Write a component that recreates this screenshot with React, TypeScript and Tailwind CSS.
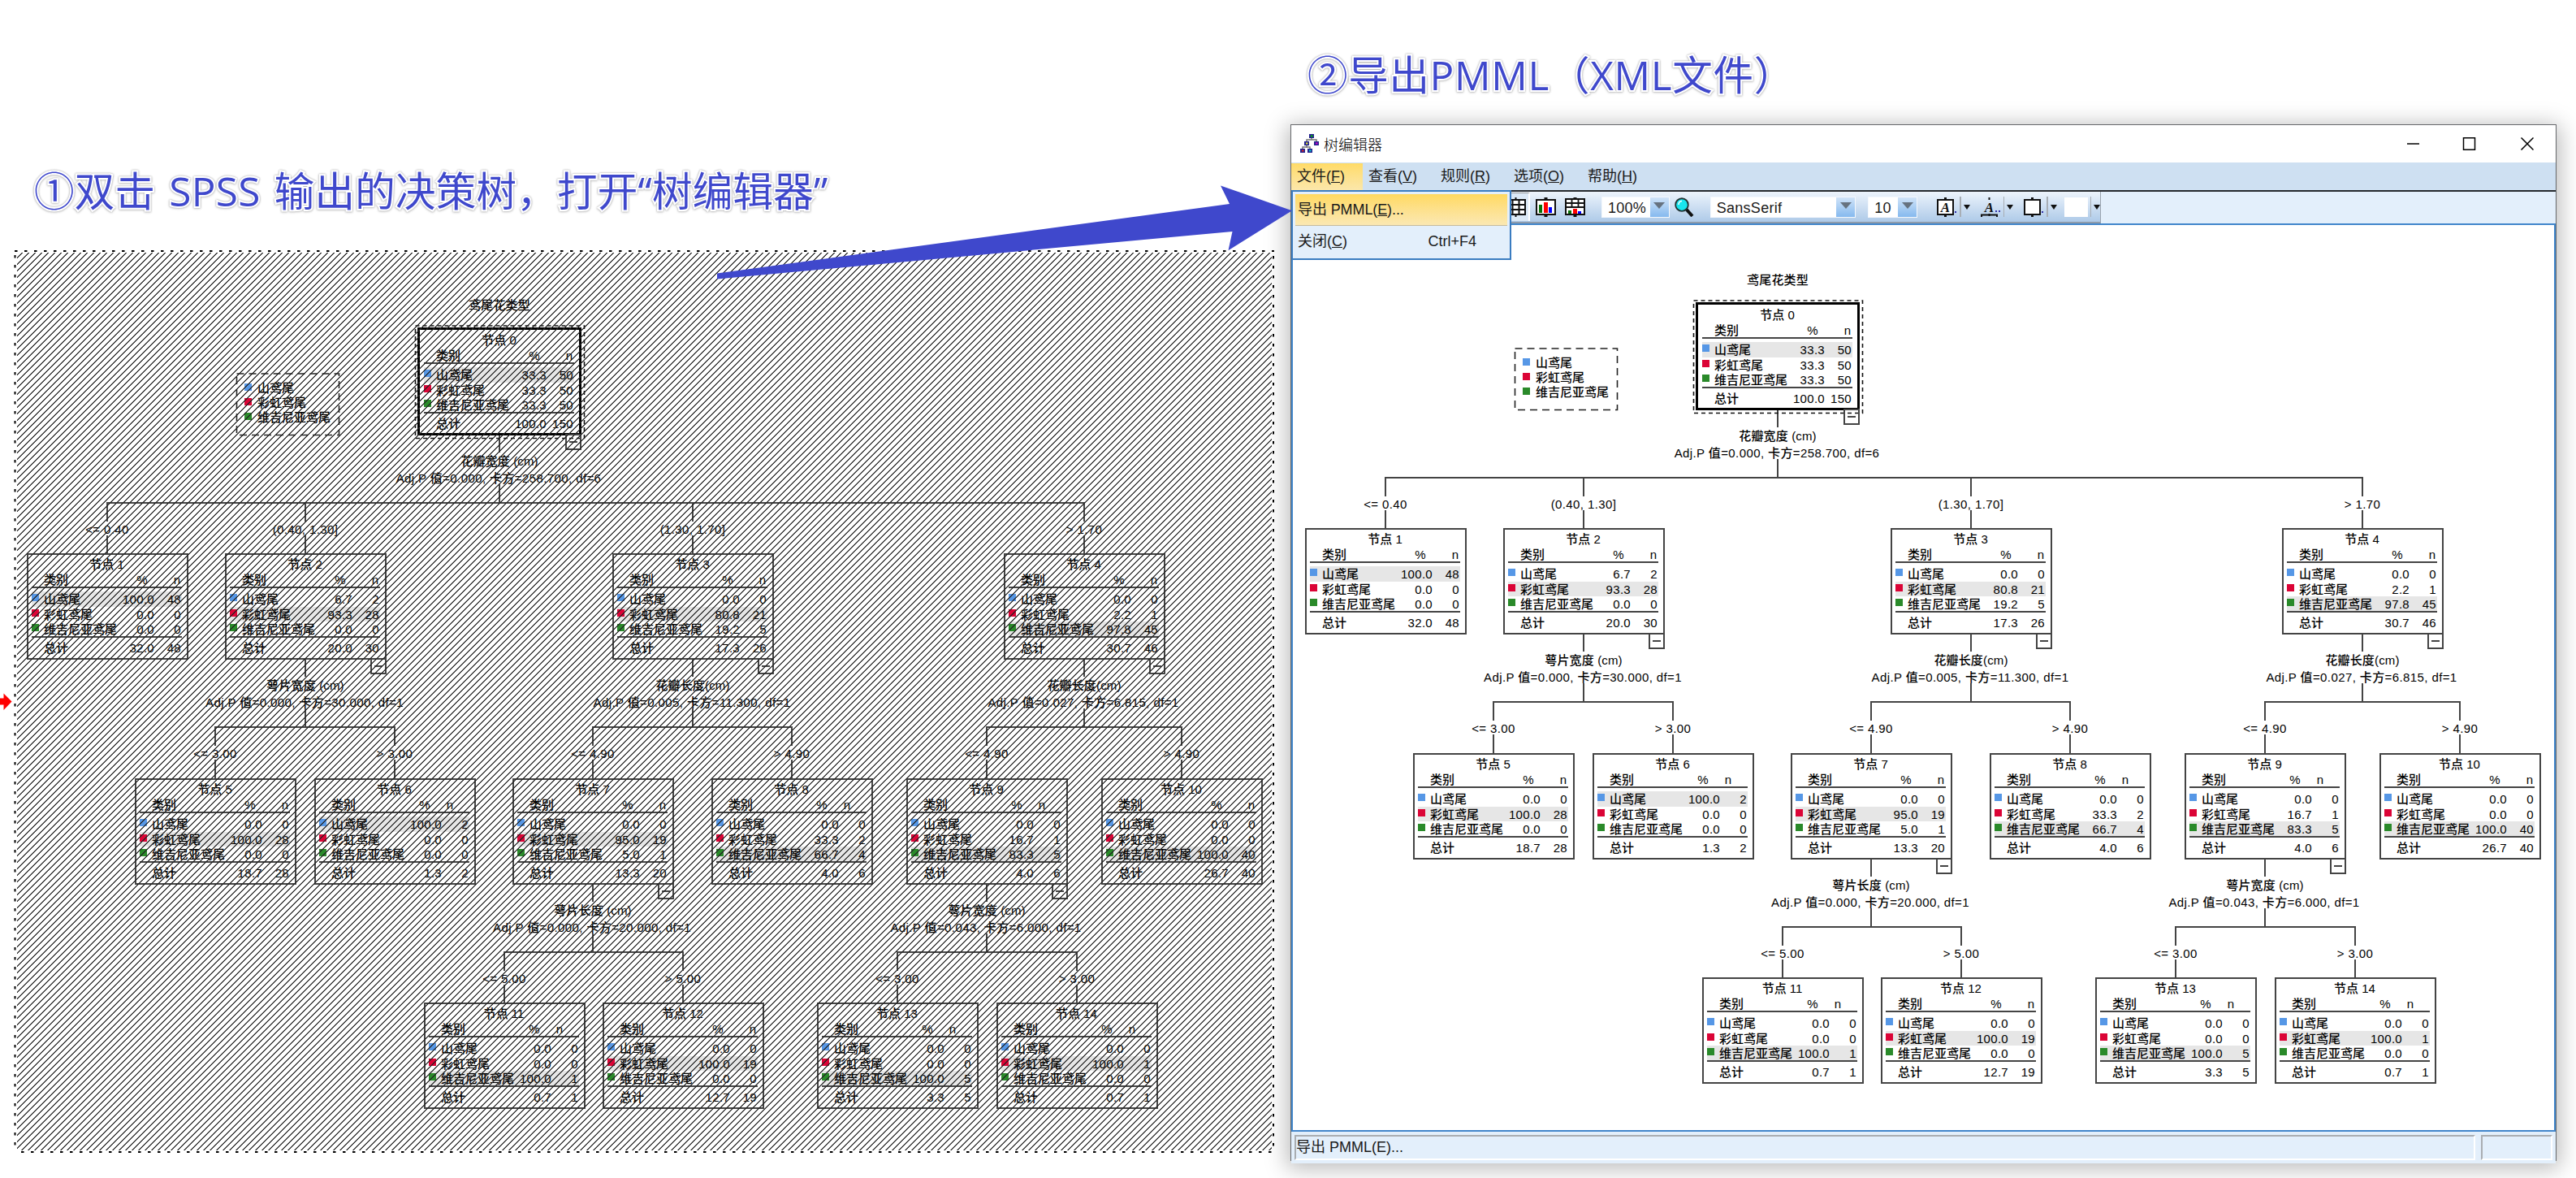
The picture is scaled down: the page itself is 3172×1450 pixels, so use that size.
import React from "react";

type Row = [string, string];
type NodeData = {
  id: number;
  x: number;
  y: number;
  rows: [Row, Row, Row];
  total: Row;
  hl: number;
  narrow?: boolean;
};
type Split = { from: number; title: string; stat: string; to: [number, string][] };

const ROW_Y = [97, 373, 650, 926];

const NODES: NodeData[] = [
  { id: 0, x: 498, y: ROW_Y[0], rows: [["33.3", "50"], ["33.3", "50"], ["33.3", "50"]], total: ["100.0", "150"], hl: 0 },
  { id: 1, x: 15, y: ROW_Y[1], rows: [["100.0", "48"], ["0.0", "0"], ["0.0", "0"]], total: ["32.0", "48"], hl: 0 },
  { id: 2, x: 259, y: ROW_Y[1], rows: [["6.7", "2"], ["93.3", "28"], ["0.0", "0"]], total: ["20.0", "30"], hl: 1 },
  { id: 3, x: 736, y: ROW_Y[1], rows: [["0.0", "0"], ["80.8", "21"], ["19.2", "5"]], total: ["17.3", "26"], hl: 1 },
  { id: 4, x: 1218, y: ROW_Y[1], rows: [["0.0", "0"], ["2.2", "1"], ["97.8", "45"]], total: ["30.7", "46"], hl: 2 },
  { id: 5, x: 148, y: ROW_Y[2], rows: [["0.0", "0"], ["100.0", "28"], ["0.0", "0"]], total: ["18.7", "28"], hl: 1 },
  { id: 6, x: 369, y: ROW_Y[2], rows: [["100.0", "2"], ["0.0", "0"], ["0.0", "0"]], total: ["1.3", "2"], hl: 0, narrow: true },
  { id: 7, x: 613, y: ROW_Y[2], rows: [["0.0", "0"], ["95.0", "19"], ["5.0", "1"]], total: ["13.3", "20"], hl: 1 },
  { id: 8, x: 858, y: ROW_Y[2], rows: [["0.0", "0"], ["33.3", "2"], ["66.7", "4"]], total: ["4.0", "6"], hl: 2, narrow: true },
  { id: 9, x: 1098, y: ROW_Y[2], rows: [["0.0", "0"], ["16.7", "1"], ["83.3", "5"]], total: ["4.0", "6"], hl: 2, narrow: true },
  { id: 10, x: 1338, y: ROW_Y[2], rows: [["0.0", "0"], ["0.0", "0"], ["100.0", "40"]], total: ["26.7", "40"], hl: 2 },
  { id: 11, x: 504, y: ROW_Y[3], rows: [["0.0", "0"], ["0.0", "0"], ["100.0", "1"]], total: ["0.7", "1"], hl: 2, narrow: true },
  { id: 12, x: 724, y: ROW_Y[3], rows: [["0.0", "0"], ["100.0", "19"], ["0.0", "0"]], total: ["12.7", "19"], hl: 1 },
  { id: 13, x: 988, y: ROW_Y[3], rows: [["0.0", "0"], ["0.0", "0"], ["100.0", "5"]], total: ["3.3", "5"], hl: 2, narrow: true },
  { id: 14, x: 1209, y: ROW_Y[3], rows: [["0.0", "0"], ["100.0", "1"], ["0.0", "0"]], total: ["0.7", "1"], hl: 1, narrow: true },
];

const SPLITS: Split[] = [
  { from: 0, title: "花瓣宽度 (cm)", stat: "Adj.P 值=0.000, 卡方=258.700, df=6", to: [[1, "<= 0.40"], [2, "(0.40, 1.30]"], [3, "(1.30, 1.70]"], [4, "> 1.70"]] },
  { from: 2, title: "萼片宽度 (cm)", stat: "Adj.P 值=0.000, 卡方=30.000, df=1", to: [[5, "<= 3.00"], [6, "> 3.00"]] },
  { from: 3, title: "花瓣长度(cm)", stat: "Adj.P 值=0.005, 卡方=11.300, df=1", to: [[7, "<= 4.90"], [8, "> 4.90"]] },
  { from: 4, title: "花瓣长度(cm)", stat: "Adj.P 值=0.027, 卡方=6.815, df=1", to: [[9, "<= 4.90"], [10, "> 4.90"]] },
  { from: 7, title: "萼片长度 (cm)", stat: "Adj.P 值=0.000, 卡方=20.000, df=1", to: [[11, "<= 5.00"], [12, "> 5.00"]] },
  { from: 9, title: "萼片宽度 (cm)", stat: "Adj.P 值=0.043, 卡方=6.000, df=1", to: [[13, "<= 3.00"], [14, "> 3.00"]] },
];

const CATEGORIES = [
  { name: "山鸢尾", swatch: "bg-[#5697e6]" },
  { name: "彩虹鸢尾", swatch: "bg-[#db0436]" },
  { name: "维吉尼亚鸢尾", swatch: "bg-[#2a8a2a]" },
];

const NODE_W = 199;
const NODE_H = 131;
const SPLIT_IDS = SPLITS.map((s) => s.from);

function TreeNode({ node }: { node: NodeData }) {
  const rowHeights = ["h-[19px]", "h-[18px]", "h-[18px]"];
  const root = node.id === 0;
  return (
    <div className="absolute h-[131px] w-[199px]" style={{ left: node.x, top: node.y }}>
      {root && <div className="absolute -left-[2px] -right-px -top-[2px] bottom-0 border-[3px] border-black" />}
      <div className={`flex h-full flex-col border-2 pl-1 pr-1.5 ${root ? "border-transparent" : "border-[#444]"}`}>
        <div className="flex h-[22px] shrink-0 items-center justify-center">节点 {node.id}</div>
        <div className="flex h-[19px] shrink-0 items-center border-b-2 border-[#444] pl-[15px] pr-0.5">
          <span className="flex-1">类别</span>
          <span className={node.narrow ? "mr-3.5" : "mr-[32px]"}>%</span>
          <span className={node.narrow ? "mr-[18px] ml-1.5" : ""}>n</span>
        </div>
        <div className="mt-1 flex shrink-0 flex-col">
          {CATEGORIES.map((c, i) => (
            <div key={c.name} className={`flex items-center pr-px ${rowHeights[i]} ${node.hl === i ? "bg-[#e6e6e6]" : ""}`}>
              <div className="w-[15px] shrink-0">
                <div className={`mb-1 size-[9px] ${c.swatch}`} />
              </div>
              <span className="w-[91px] shrink-0">{c.name}</span>
              <span className="w-[45px] shrink-0 text-right tracking-[0.3px]">{node.rows[i][0]}</span>
              <span className="flex-1 text-right tracking-[0.3px]">{node.rows[i][1]}</span>
            </div>
          ))}
        </div>
        <div className="flex h-[26px] shrink-0 items-center border-t-2 border-[#444] pr-px">
          <span className="ml-[15px] w-[91px] shrink-0">总计</span>
          <span className="w-[45px] shrink-0 text-right tracking-[0.3px]">{node.total[0]}</span>
          <span className="flex-1 text-right tracking-[0.3px]">{node.total[1]}</span>
        </div>
      </div>
      {SPLIT_IDS.includes(node.id) && (
        <div className={`absolute top-[129px] flex h-[20px] w-[20px] items-center justify-center border-2 border-[#444] ${root ? "-right-px" : "right-0"}`}>
          <div className="h-[2px] w-[10px] bg-[#444]" />
        </div>
      )}
    </div>
  );
}

function CenterText({ x, y, wide, children }: { x: number; y: number; wide?: boolean; children: React.ReactNode }) {
  return (
    <div
      className={`absolute -translate-x-1/2 -translate-y-1/2 ${wide ? "tracking-[0.4px]" : "tracking-[0.15px]"}`}
      style={{ left: x, top: y }}
    >
      {children}
    </div>
  );
}

/* Decision tree diagram: connector lines, split labels, legend and nodes. */
function Tree() {
  const centre = (id: number) => NODES[id].x + Math.floor(NODE_W / 2);
  return (
    <div className="relative h-[1113px] w-[1551px] whitespace-nowrap font-['Liberation_Sans','Noto_Sans_CJK_SC',sans-serif] text-[15px] font-medium leading-none text-black">
      <svg className="absolute inset-0" width="1551" height="1113" fill="none" stroke="#444" strokeWidth="2">
        {SPLITS.map((s) => {
          const x = centre(s.from);
          const b = NODES[s.from].y + NODE_H - 1;
          const bar = b + 84;
          const xs = s.to.map(([id]) => centre(id));
          return (
            <g key={s.from}>
              <path d={`M${x} ${b}V${b + 22}M${x} ${b + 61}V${bar}`} />
              <path d={`M${xs[0] - 1} ${bar}H${xs[xs.length - 1] + 1}`} />
              {xs.map((cx) => (
                <path key={cx} d={`M${cx} ${bar}V${bar + 23}M${cx} ${bar + 40}V${bar + 63}`} />
              ))}
            </g>
          );
        })}
        <rect x="493.500" y="93" width="208" height="138.500" strokeDasharray="5 4" stroke="#111" strokeWidth="1.6" />
        <rect x="273.500" y="152" width="126" height="75.500" strokeDasharray="9 6" stroke="#222" strokeWidth="1.6" />
      </svg>
      <CenterText x={597} y={67}>鸢尾花类型</CenterText>
      <div className="absolute left-[283px] top-[160px] flex flex-col">
        {CATEGORIES.map((c) => (
          <div key={c.name} className="flex h-[18px] items-center">
            <div className="w-4"><div className={`mb-px size-[9px] ${c.swatch}`} /></div>
            {c.name}
          </div>
        ))}
      </div>
      {SPLITS.map((s) => {
        const b = NODES[s.from].y + NODE_H - 1;
        return (
          <React.Fragment key={s.from}>
            <CenterText x={centre(s.from)} y={b + 32}>{s.title}</CenterText>
            <CenterText x={centre(s.from) - 1} y={b + 52.5} wide>{s.stat}</CenterText>
            {s.to.map(([id, label]) => (
              <CenterText key={id} x={centre(id)} y={b + 116} wide>{label}</CenterText>
            ))}
          </React.Fragment>
        );
      })}
      {NODES.map((n) => (
        <TreeNode key={n.id} node={n} />
      ))}
    </div>
  );
}

function Heading({ className, children }: { className: string; children: React.ReactNode }) {
  return (
    <h1
      className={`whitespace-nowrap font-['Open_Sans','Noto_Sans_CJK_SC',sans-serif] text-[49.5px] leading-[60px] text-[#3f48cc] [paint-order:stroke_fill] [-webkit-text-stroke:4px_white] [filter:drop-shadow(0_0_1px_#aaa)_drop-shadow(0_1px_1px_#ddd)] ${className}`}
    >
      {children}
    </h1>
  );
}

function MenuItem({ label, mnemonic, active }: { label: string; mnemonic: string; active?: boolean }) {
  return (
    <div className={`flex items-center pl-[7px] pr-[22px] ${active ? "bg-linear-to-b from-[#ffdb66] to-[#fbe7aa]" : ""}`}>
      <span>{label}(<u>{mnemonic}</u>)</span>
    </div>
  );
}

function Combo({ value, className }: { value: string; className: string }) {
  return (
    <div className={`flex h-[26px] justify-between border border-[#f4f8fd] bg-white ${className}`}>
      <span className="pl-[7px] leading-[26px] tracking-[0.3px]">{value}</span>
      <div className="flex w-[23px] items-center justify-center bg-linear-to-b from-[#cfe3f8] to-[#85b9ee]">
        <svg width="14" height="8" className="mb-1"><path d="M0 0H14L7 8Z" fill="#66727f" /></svg>
      </div>
    </div>
  );
}

function Caret() {
  return (
    <>
      <div className="h-[25px] w-[1.5px] bg-[#a8aeb5]" />
      <svg width="8" height="6" className="ml-[3px]"><path d="M0 0H8L4 6Z" fill="#111" /></svg>
    </>
  );
}

function GridIcon() {
  return (
    <svg width="25" height="24" viewBox="0 0 25 24" fill="none" stroke="#111" strokeWidth="2">
      <rect x="1" y="3" width="23" height="18" fill="#fff" />
      <path d="M1 9H24M1 15H24M8.500 3V21M16.500 3V21M12.500 0V3M12.500 21V24" />
    </svg>
  );
}

function ChartIcon() {
  return (
    <svg width="25" height="24" viewBox="0 0 25 24">
      <rect x="1" y="3" width="23" height="18" fill="#fff" stroke="#111" strokeWidth="2" />
      <path d="M12.500 0V3M12.500 21V24" stroke="#111" strokeWidth="4" />
      <path d="M4 9H8V19H4Z" fill="#087008" />
      <path d="M10 6H15V19H10Z" fill="#f00" />
      <path d="M16 12H20V19H16Z" fill="#00f" />
    </svg>
  );
}

function GridChartIcon() {
  return (
    <svg width="25" height="24" viewBox="0 0 25 24">
      <rect x="1" y="2" width="23" height="19" fill="#fff" stroke="#111" strokeWidth="2" />
      <path d="M1 7H24M1 12H24M8.500 2V12M16.500 2V12" stroke="#111" strokeWidth="1.8" />
      <path d="M12.500 0V3M12.500 21V24" stroke="#111" strokeWidth="4" />
      <path d="M4 16H8V20H4Z" fill="#087008" />
      <path d="M10 14H15V20H10Z" fill="#f00" />
      <path d="M16 17H20V20H16Z" fill="#00f" />
    </svg>
  );
}

function TreeEditorIcon() {
  return (
    <svg width="24" height="24" viewBox="0 0 24 24">
      <path d="M14 4V7M8 11V7H20V11M8 14V17M3 20V16H12V20" stroke="#777" strokeWidth="1.5" fill="none" />
      <g fill="#23238e">
        <path d="M11 0H17V5H11ZM5 9H11V14H5ZM17 9H23V14H17ZM0 18H6V23H0ZM9 18H15V23H9Z" />
      </g>
      <path d="M13 1.500H15.500V3.500H13Z" fill="#0b0" />
      <path d="M7 10.500H9.500V12.500H7Z" fill="#dd3" />
      <path d="M19 10.500H21.500V12.500H19Z" fill="#c0c" />
      <path d="M2 19.500H4.500V21.500H2Z" fill="#d22" />
      <path d="M11 19.500H13.500V21.500H11Z" fill="#0cc" />
    </svg>
  );
}

function EditorWindow() {
  return (
    <div className="relative flex h-[1276px] w-[1559px] flex-col border border-[#66686b] bg-white shadow-[0_5px_26px_4px_rgba(0,0,0,0.28)]">
      {/* title bar */}
      <div className="flex h-[46px] shrink-0 items-center pl-[11px] pr-[27px]">
        <TreeEditorIcon />
        <span className="ml-[5px] flex-1 font-['Noto_Sans_CJK_SC',sans-serif] text-[18px] font-light text-black">树编辑器</span>
        <svg width="156" height="16" fill="none" stroke="#000" strokeWidth="1.500">
          <path d="M0 8H15M140.500 0.500L155.500 15.500M155.500 0.500L140.500 15.500" />
          <rect x="69.500" y="0.750" width="14" height="14.500" />
        </svg>
      </div>
      <div className="flex h-[34px] shrink-0 bg-[#cee0f2] pt-px">
        <MenuItem label="文件" mnemonic="F" active />
        <MenuItem label="查看" mnemonic="V" />
        <MenuItem label="规则" mnemonic="R" />
        <MenuItem label="选项" mnemonic="O" />
        <MenuItem label="帮助" mnemonic="H" />
      </div>
      {/* toolbar */}
      <div className="flex h-[41px] shrink-0 border-t-2 border-[#26292d] bg-[#e3effb]">
        <div className="flex w-[997px] items-center border-b-2 border-r border-b-[#8e9bab] border-r-[#9aa3ad] bg-linear-to-b from-[#edf4fc] to-[#aecae8] pl-[264px]">
          <div className="flex h-[35px] w-[30px] items-center border-r-2 border-t border-r-white border-t-[#999] bg-[#dce9f6]">
            <GridIcon />
          </div>
          <div className="ml-[7px]"><ChartIcon /></div>
          <div className="ml-[11px]"><GridChartIcon /></div>
          <Combo value="100%" className="ml-[20px] w-[84px]" />
          <svg className="ml-[6px]" width="24" height="24" viewBox="0 0 24 24">
            <path d="M14 14L22 23" stroke="#111" strokeWidth="4" />
            <circle cx="9" cy="9" r="7.800" fill="#19e6ee" stroke="#233" strokeWidth="1.800" />
            <path d="M5 9A4.500 4.500 0 0 1 9 4.500" stroke="#fff" strokeWidth="1.500" fill="none" />
          </svg>
          <Combo value="SansSerif" className="ml-[20px] w-[180px]" />
          <Combo value="10" className="ml-[15px] w-[61px]" />
          <div className="ml-[24px] flex items-center">
            <svg width="28" height="24" viewBox="0 0 28 24" className="overflow-visible">
              <rect x="1" y="3" width="19" height="18" fill="#fff" stroke="#111" strokeWidth="2" />
              <path d="M10.500 0V3M10.500 21V24" stroke="#111" strokeWidth="3" />
              <text x="10.500" y="18" textAnchor="middle" fontSize="17" fontWeight="bold" fontStyle="italic" fontFamily="Liberation Serif" fill="#111">A</text>
              <path d="M22 17H24V19H22Z" fill="#33a" />
            </svg>
            <Caret />
          </div>
          <div className="ml-[13px] flex items-center">
            <svg width="28" height="24" viewBox="0 0 28 24">
              <path d="M10.500 0V3M10.500 20V23M1 24V21.500H20V24" stroke="#111" strokeWidth="2" fill="none" />
              <text x="10.500" y="18" textAnchor="middle" fontSize="17" fontWeight="bold" fontStyle="italic" fontFamily="Liberation Serif" fill="#111">A</text>
              <path d="M18 16H20V18H18ZM22 16H24V18H22Z" fill="#33a" />
            </svg>
            <Caret />
          </div>
          <div className="ml-[13px] flex items-center">
            <svg width="28" height="24" viewBox="0 0 28 24">
              <rect x="1" y="3" width="19" height="18" fill="#fff" stroke="#111" strokeWidth="2" />
              <path d="M10.500 0V3M10.500 21V24" stroke="#111" strokeWidth="3" />
              <path d="M22 17H24V19H22Z" fill="#33a" />
            </svg>
            <Caret />
          </div>
          <div className="ml-[9px] flex items-center">
            <div className="mr-[3px] h-[24px] w-[29px] bg-white" />
            <Caret />
          </div>
        </div>
      </div>
      {/* canvas */}
      <div className="h-[1118px] shrink-0 border-2 border-[#4186cb] bg-white">
        <Tree />
      </div>
      {/* status bar */}
      <div className="flex flex-1 gap-[7px] bg-[#e3effb] pb-[4px] pl-[4px] pr-[4px] pt-[4px]">
        <div className="flex flex-1 items-center border-2 border-b-white border-l-[#a9adb1] border-r-white border-t-[#a9adb1]">
          导出 PMML(E)...
        </div>
        <div className="w-[88px] border-2 border-b-white border-l-[#a9adb1] border-r-white border-t-[#a9adb1]" />
      </div>
      {/* open file menu */}
      <div className="absolute left-0 top-[80px] flex h-[86px] w-[271px] flex-col border-2 border-[#3a7cc0] bg-[#e3effb] px-[3px] pt-[3px]">
        <div className="flex h-[39px] shrink-0 items-center border-b border-[#c5bb9c] bg-linear-to-b from-[#ffd95f] to-[#fbe8b2] pl-[3px]">
          <span className="-tracking-[0.1px]">导出 PMML(<u>E</u>)...</span>
        </div>
        <div className="flex h-[39px] items-center justify-between pl-[3px] pr-[38px]">
          <span>关闭(<u>C</u>)</span>
          <span>Ctrl+F4</span>
        </div>
      </div>
    </div>
  );
}

export default function App() {
  return (
    <div className="relative flex h-[1450px] w-[3172px] overflow-hidden bg-white font-['Liberation_Sans','Noto_Sans_CJK_SC',sans-serif] text-[18px] text-[#1a1a1a]">
      <div className="flex w-[1589px] flex-col pt-[205px]">
        <Heading className="pl-[42px] tracking-[0.25px] [word-spacing:4px]">①双击 SPSS 输出的决策树，打开“树编辑器”</Heading>
        <div className="relative ml-[18px] mt-[43px] h-[1111px] w-[1551px]">
          <Tree />
          <div className="absolute bottom-[3px] left-[3px] right-[3px] top-[3px] bg-[repeating-linear-gradient(135deg,transparent_0px,transparent_3.9px,#222_4.4px,#222_5.157px,transparent_5.657px)]" />
          <svg className="absolute inset-0 overflow-visible" width="1551" height="1111" stroke="#000" strokeWidth="2" fill="none">
            <path d="M0 1H1551M8 1110H1551" strokeDasharray="3.500 8.500" />
            <path d="M0.500 6V1110M1550 7V1110" strokeDasharray="3.500 8.500" />
          </svg>
        </div>
      </div>
      <div className="flex w-[1583px] flex-col pt-[62px]">
        <Heading className="pl-[21px] tracking-[0.7px]">②导出PMML（XML文件）</Heading>
        <div className="mt-[31px]">
          <EditorWindow />
        </div>
      </div>
      {/* annotation arrows */}
      <svg className="absolute inset-0" width="3172" height="1450">
        <path d="M883 336.500L1514 251L1503 228.500L1591 259.300L1512.500 308.300L1517.500 285L883 343.500Z" fill="#3f48cc" />
        <path d="M0 859.500H4.500V853.500L14.500 863.500L4.500 874V867.500H0Z" fill="#f00" />
      </svg>
    </div>
  );
}
